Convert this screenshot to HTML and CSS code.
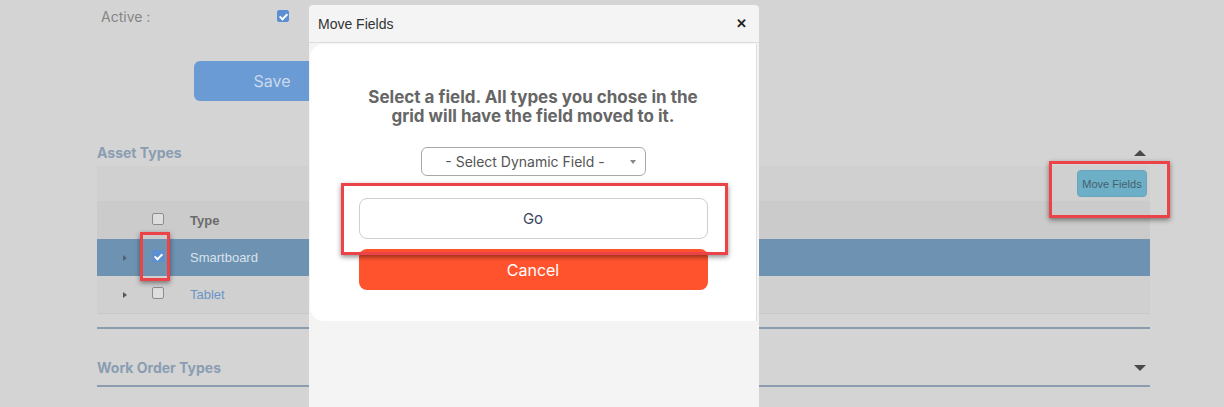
FILE: index.html
```html
<!DOCTYPE html>
<html>
<head>
    <link rel="stylesheet" href="styles.css">
</head>
<body>
    <div class="page">
        <!-- Active row -->
        <div class="form-row">
            <label class="form-label">Active :</label>
            <span class="check checked"></span>
        </div>

        <!-- Save -->
        <button type="button" class="save-btn">Save</button>

        <!-- Asset Types section -->
        <div class="section-head">
            <h2>Asset Types</h2>
            <span class="tri-up"></span>
        </div>
        <div class="grid">
            <div class="toolbar">
                <button type="button" class="move-btn">Move Fields</button>
            </div>
            <div class="grid-row grid-header">
                <span class="cell-exp"></span>
                <span class="cell-check"><span class="check"></span></span>
                <span class="cell-text">Type</span>
            </div>
            <div class="grid-row selected">
                <span class="cell-exp"><span class="tri-right"></span></span>
                <span class="cell-check"><span class="check checked"></span></span>
                <span class="cell-text">Smartboard</span>
            </div>
            <div class="grid-row">
                <span class="cell-exp"><span class="tri-right"></span></span>
                <span class="cell-check"><span class="check"></span></span>
                <span class="cell-text link">Tablet</span>
            </div>
        </div>
        <div class="divider"></div>

        <!-- Work Order Types section -->
        <div class="section-head closed">
            <h2>Work Order Types</h2>
            <span class="tri-down"></span>
        </div>
        <div class="divider flush"></div>
    </div>

    <!-- Modal -->
    <div class="modal">
        <div class="modal-header">
            <span>Move Fields</span>
            <span class="close">&#x2715;</span>
        </div>
        <div class="modal-body">
            <p class="modal-text">Select a field. All types you chose in the<br>grid will have the field moved to it.</p>
            <div class="select">
                <span>- Select Dynamic Field -</span>
                <span class="select-arrow"></span>
            </div>
            <button type="button" class="go-btn">Go</button>
            <button type="button" class="cancel-btn">Cancel</button>
        </div>
    </div>

    <!-- Annotation boxes -->
    <div class="mark mark-check"></div>
    <div class="mark mark-move"></div>
    <div class="mark mark-go"></div>
</body>
</html>
```

FILE: styles.css
```css
body {
    margin: 0;
    background: #d4d4d4;
    font-family: "Liberation Sans", Arial, sans-serif;
    height: 407px;
    overflow: hidden;
    position: relative;
}

.page {
    padding: 0 74px 0 97px;
}

.form-row {
    display: flex;
    align-items: center;
    height: 32px;
}

.form-label {
    font-family: Inter, sans-serif;
    font-size: 14px;
    color: #858585;
    padding-left: 4px;
    width: 176px;
}

.check {
    display: inline-block;
    width: 10px;
    height: 10px;
    border: 1px solid #8c8c8c;
    border-radius: 2px;
    background: #dedede;
    position: relative;
}

.check.checked {
    background: #5b8fd2;
    border-color: #5b8fd2;
}

.check.checked::after {
    content: "";
    position: absolute;
    left: 3px;
    top: 1px;
    width: 3px;
    height: 6px;
    border: solid #fff;
    border-width: 0 2px 2px 0;
    transform: rotate(45deg);
}

.save-btn {
    display: block;
    margin: 29px 0 0 97px;
    width: 156px;
    height: 40px;
    border: none;
    border-radius: 6px;
    background: #6a9bd5;
    color: #c9d8eb;
    font-family: Inter, sans-serif;
    font-size: 16px;
}

.section-head {
    display: flex;
    justify-content: space-between;
    align-items: center;
    height: 26px;
    margin-top: 38px;
}

.section-head h2 {
    margin: 0;
    font-family: Inter, sans-serif;
    font-size: 14px;
    font-weight: 700;
    color: #8a9db2;
}

.tri-up {
    width: 0;
    height: 0;
    border-left: 6px solid transparent;
    border-right: 6px solid transparent;
    border-bottom: 6px solid #4a4a4a;
    margin-right: 4px;
    margin-top: 2px;
}

.tri-down {
    width: 0;
    height: 0;
    border-left: 6px solid transparent;
    border-right: 6px solid transparent;
    border-top: 6px solid #4a4a4a;
    margin-right: 4px;
    margin-bottom: 5px;
}

.toolbar {
    height: 35px;
    margin-top: 1px;
    background: #d0d0d0;
    display: flex;
    justify-content: flex-end;
    align-items: center;
    padding-right: 3px;
}

.move-btn {
    height: 27px;
    width: 70px;
    padding: 0;
    border: 1px solid #6aa4bc;
    border-radius: 4px;
    background: #6cafc6;
    color: #465f6d;
    font-family: "Liberation Sans", Arial, sans-serif;
    font-size: 11px;
}

.grid-row {
    display: flex;
    align-items: center;
    height: 37px;
    background: #d0d0d0;
    font-size: 13px;
    color: #d8e2ec;
}

.grid-header {
    height: 38px;
    background: #cbcbcb;
    color: #6b6b6b;
    font-weight: 700;
}

.grid-row.selected {
    background: #6e92b2;
}

.grid-row:last-child {
    border-bottom: 1px solid #c9c9c9;
}

.cell-exp {
    width: 55px;
    display: flex;
    justify-content: center;
}

.tri-right {
    width: 0;
    height: 0;
    border-top: 3px solid transparent;
    border-bottom: 3px solid transparent;
    border-left: 4px solid #555;
}

.selected .tri-right {
    border-left-color: #4e647a;
}

.cell-check {
    width: 38px;
}

.cell-text.link {
    color: #6b95c5;
}

.divider {
    height: 2px;
    background: #8a9cae;
    margin-top: 13px;
}

.divider.flush {
    margin-top: 0;
}

.section-head.closed {
    margin-top: 0;
    align-items: flex-end;
    padding-bottom: 9px;
    box-sizing: border-box;
    height: 56px;
}

/* modal */
.modal {
    position: absolute;
    left: 309px;
    top: 5px;
    width: 450px;
    height: 420px;
    background: #f4f4f4;
    border-radius: 4px;
}

.modal-header {
    display: flex;
    justify-content: space-between;
    align-items: center;
    height: 37px;
    padding: 0 12px 0 9px;
    border-bottom: 1px solid #dcdcdc;
    font-size: 14px;
    color: #333;
}

.close {
    font-size: 13px;
    font-weight: 700;
    color: #222;
}

.modal-body {
    margin: 1px 2px 0 1px;
    background: #fff;
    border-radius: 14px 0 0 14px;
    border-right: 1px solid #dedede;
    padding: 44px 49px 31px 49px;
    display: flex;
    flex-direction: column;
    align-items: center;
}

.modal-text {
    margin: 0;
    font-family: Inter, sans-serif;
    font-size: 17px;
    font-weight: 700;
    line-height: 19px;
    color: #666;
    text-align: center;
}

.select {
    margin-top: 21px;
    width: 225px;
    height: 29px;
    box-sizing: border-box;
    border: 1px solid #a8a8a8;
    border-radius: 6px;
    display: flex;
    align-items: center;
    justify-content: center;
    position: relative;
    font-family: Inter, sans-serif;
    font-size: 14px;
    color: #555;
    padding-right: 16px;
}

.select-arrow {
    position: absolute;
    right: 9px;
    top: 12px;
    border-left: 3px solid transparent;
    border-right: 3px solid transparent;
    border-top: 4px solid #888;
}

.go-btn, .cancel-btn {
    width: 349px;
    height: 41px;
    border-radius: 8px;
    font-family: Inter, sans-serif;
    font-size: 15px;
}

.go-btn {
    margin-top: 22px;
    background: #fff;
    border: 1px solid #cfcfcf;
    color: #3a4560;
}

.cancel-btn {
    margin-top: 10px;
    background: #ff532e;
    border: none;
    color: #fff;
    font-size: 16px;
}

/* red annotation boxes */
.mark {
    position: absolute;
    border: 3px solid #ec4348;
    box-shadow: 0 2px 5px rgba(0, 0, 0, 0.45);
    box-sizing: border-box;
}

.mark-check {
    left: 140px;
    top: 232px;
    width: 30px;
    height: 49px;
}

.mark-move {
    left: 1049px;
    top: 161px;
    width: 121px;
    height: 57px;
}

.mark-go {
    left: 341px;
    top: 183px;
    width: 387px;
    height: 72px;
}
```
